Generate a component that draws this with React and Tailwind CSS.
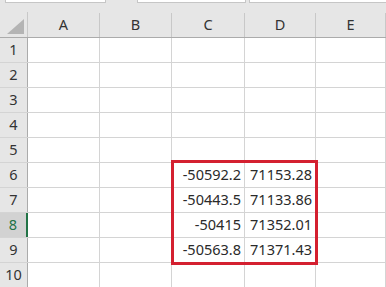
import React from 'react';

const columns = [
  { label: 'A', width: 'w-[72px]' },
  { label: 'B', width: 'w-[72px]' },
  { label: 'C', width: 'w-[73px]' },
  { label: 'D', width: 'w-[71px]' },
  { label: 'E', width: 'w-[70px]' },
];

const data = {
  6: ['-50592.2', '71153.28'],
  7: ['-50443.5', '71133.86'],
  8: ['-50415', '71352.01'],
  9: ['-50563.8', '71371.43'],
};

const rows = [1, 2, 3, 4, 5, 6, 7, 8, 9, 10];

const App = () => {
  return (
    <div
      className="w-[386px] h-[287px] overflow-hidden bg-white text-[#333]"
      style={{ fontFamily: '"Noto Sans", "Noto Sans CJK JP", sans-serif' }}
    >
      {/* Formula bar strip */}
      <div className="flex h-[12px] bg-[#e6e6e6]">
        <div className="ml-[5px] w-[101px] h-[3px] bg-white border border-t-0 border-[#c6c6c6]"></div>
        <div className="ml-[31px] w-[109px] h-[3px] bg-white border border-t-0 border-[#c6c6c6]"></div>
        <div className="ml-[3px] flex-1 h-[3px] bg-white border border-t-0 border-r-0 border-[#c6c6c6]"></div>
      </div>

      {/* Column headers */}
      <div className="flex h-[26px] bg-[#e6e6e6] border-b border-[#ababab]">
        <div className="w-[28px] shrink-0 border-r border-[#c8c8c8] flex items-end justify-end pr-[3px] pb-[3px]">
          <svg width="17" height="15" viewBox="0 0 17 15">
            <polygon points="17,0 17,15 0,15" fill="#b4b4b4" />
          </svg>
        </div>
        {columns.map((col) => (
          <div
            key={col.label}
            className={`${col.width} shrink-0 mt-[1px] border-r border-[#c8c8c8] flex items-center justify-center text-[14.5px] text-[#333]`}
          >
            {col.label}
          </div>
        ))}
      </div>

      {/* Rows */}
      <div className="relative">
        {rows.map((row) => (
          <div key={row} className="flex h-[25px] border-b border-[#d4d4d4]">
            <div
              className={
                row === 8
                  ? 'w-[28px] shrink-0 bg-[#d2d2d2] border-r-2 border-[#217346] flex items-center justify-center text-[14.5px] text-[#217346]'
                  : 'w-[28px] shrink-0 bg-[#e6e6e6] border-r border-[#ababab] flex items-center justify-center text-[14.5px] text-[#333]'
              }
            >
              {row}
            </div>
            {columns.map((col, i) => (
              <div
                key={col.label}
                className={`${col.width} shrink-0 border-r border-[#d4d4d4] flex items-center justify-end pr-[3px] text-[14.5px] text-[#2a2a2a]`}
              >
                {data[row] && i === 2 ? data[row][0] : ''}
                {data[row] && i === 3 ? data[row][1] : ''}
              </div>
            ))}
          </div>
        ))}

        {/* Selection outline */}
        <div className="absolute left-[171px] top-[122px] w-[147px] h-[105px] border-[3px] border-[#d42030] pointer-events-none"></div>
      </div>
    </div>
  );
};

export default App;
